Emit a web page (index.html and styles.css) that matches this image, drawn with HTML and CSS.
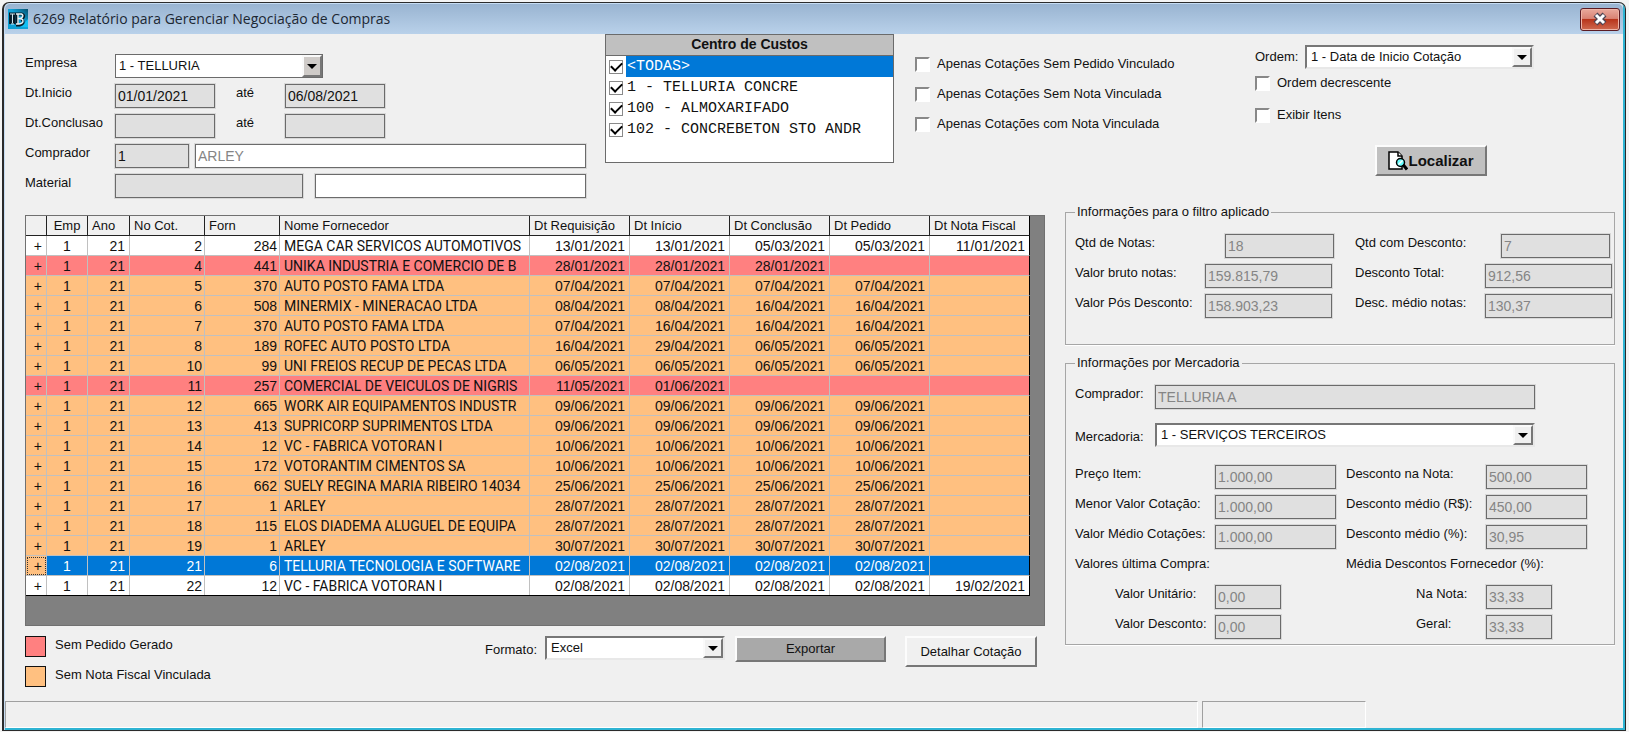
FILE: index.html
```html
<!DOCTYPE html>
<html lang="pt-BR">
<head>
<meta charset="utf-8">
<title>6269 Relatório para Gerenciar Negociação de Compras</title>
<link rel="stylesheet" href="styles.css">
</head>
<body>
<div class="window">
  <header class="titlebar">
    <svg class="app-icon" width="20" height="20" viewBox="0 0 20 20" aria-hidden="true">
      <defs><linearGradient id="sky" x1="0" y1="1" x2="1" y2="0"><stop offset="0" stop-color="#0a9ed2"/><stop offset=".55" stop-color="#10a6dc"/><stop offset="1" stop-color="#06506e"/></linearGradient></defs>
      <rect width="20" height="20" fill="url(#sky)"/>
      <path d="M13 18l7-8v8z" fill="#12c0f4"/>
      <path d="M1 5h9M2.500 5v10M6 5v10M9 5v11M9 5h5q3 1 1 4-2 1.500 0 3 1 3-3 4H8" stroke="#071a26" stroke-width="2.800" fill="none"/>
      <path d="M2 5h5M4.500 5v9M3 15h3" stroke="#cfe6ee" stroke-width="1" fill="none"/>
      <path d="M8 5h5.500q2 1 1 3-1 1.500-3.500 1.500 4 0 4 2.500t-4 3H8M10 5v10M10 9.500h2" stroke="#e9f7fb" stroke-width="1.400" fill="none"/>
    </svg>
    <h1 class="title">6269 Relatório para Gerenciar Negociação de Compras</h1>
    <button class="close" type="button" aria-label="Fechar">
      <svg width="16" height="14" viewBox="0 0 16 14" aria-hidden="true"><path d="M3.500 2.500l9 9M12.500 2.500l-9 9" stroke="#4b4453" stroke-width="5.500"/><path d="M4 3l8 8M12 3l-8 8" stroke="#fff" stroke-width="3"/></svg>
    </button>
  </header>

  <main class="content">
    <section class="filters">
      <div class="form">
        <div class="form-row">
          <label for="empresa">Empresa</label>
          <span class="select flat w-empresa"><select id="empresa"><option>1 - TELLURIA</option></select><span class="arrow"></span></span>
        </div>
        <div class="form-row">
          <label for="ini1">Dt.Inicio</label>
          <input class="field w-date" id="ini1" value="01/01/2021">
          <label class="until" for="ini2">até</label>
          <input class="field w-date" id="ini2" value="06/08/2021">
        </div>
        <div class="form-row">
          <label for="con1">Dt.Conclusao</label>
          <input class="field w-date" id="con1">
          <label class="until" for="con2">até</label>
          <input class="field w-date" id="con2">
        </div>
        <div class="form-row">
          <label for="comp">Comprador</label>
          <span class="pair"><input class="field w-code" id="comp" value="1"><input class="field white muted grow" aria-label="Nome do comprador" value="ARLEY"></span>
        </div>
        <div class="form-row">
          <label for="mat">Material</label>
          <span class="pair wide"><input class="field w-material" id="mat"><input class="field white grow" aria-label="Nome do material"></span>
        </div>
      </div>

      <div class="centers">
        <h2>Centro de Custos</h2>
        <label class="center selected"><input type="checkbox" checked><span>&lt;TODAS&gt;</span></label>
        <label class="center"><input type="checkbox" checked><span>1 - TELLURIA CONCRE</span></label>
        <label class="center"><input type="checkbox" checked><span>100 - ALMOXARIFADO</span></label>
        <label class="center"><input type="checkbox" checked><span>102 - CONCREBETON STO ANDR</span></label>
      </div>

      <div class="checks">
        <label class="check"><input type="checkbox">Apenas Cotações Sem Pedido Vinculado</label>
        <label class="check"><input type="checkbox">Apenas Cotações Sem Nota Vinculada</label>
        <label class="check"><input type="checkbox">Apenas Cotações com Nota Vinculada</label>
      </div>

      <div class="ordering">
        <div class="order-row">
          <label for="ordem">Ordem:</label>
          <span class="select grow"><select id="ordem"><option>1 - Data de Inicio Cotação</option></select><span class="arrow"></span></span>
        </div>
        <label class="check"><input type="checkbox">Ordem decrescente</label>
        <label class="check items"><input type="checkbox">Exibir Itens</label>
        <button class="btn find" type="button">
          <svg width="20" height="20" viewBox="0 0 20 20" aria-hidden="true">
            <path d="M1 1h9l4 4v13H1z" fill="#fff" stroke="#000" stroke-width="1.500"/>
            <path d="M10 1v4h4" fill="#fff" stroke="#000" stroke-width="1.500"/>
            <circle cx="12.500" cy="11.500" r="4" fill="#6ff" stroke="#000" stroke-width="1.500"/>
            <path d="M10.500 13.500l4-4" stroke="#fff" stroke-width="1.500"/>
            <path d="M15 13.500l4 5" stroke="#000" stroke-width="3"/>
          </svg>Localizar</button>
      </div>
    </section>

    <section class="lower">
      <div class="left">
        <div class="grid">
          <table>
            <colgroup><col class="c-plus"><col class="c-emp"><col class="c-ano"><col class="c-num"><col class="c-num"><col><col class="c-date"><col class="c-date"><col class="c-date"><col class="c-date"><col class="c-date"></colgroup>
            <thead><tr><th></th><th class="mid">Emp</th><th>Ano</th><th>No Cot.</th><th>Forn</th><th>Nome Fornecedor</th><th>Dt Requisição</th><th>Dt Início</th><th>Dt Conclusão</th><th>Dt Pedido</th><th>Dt Nota Fiscal</th></tr></thead>
            <tbody>
<tr><td>+</td><td>1</td><td>21</td><td>2</td><td>284</td><td>MEGA CAR SERVICOS AUTOMOTIVOS</td><td>13/01/2021</td><td>13/01/2021</td><td>05/03/2021</td><td>05/03/2021</td><td>11/01/2021</td></tr>
<tr class="red"><td>+</td><td>1</td><td>21</td><td>4</td><td>441</td><td>UNIKA INDUSTRIA E COMERCIO DE B</td><td>28/01/2021</td><td>28/01/2021</td><td>28/01/2021</td><td></td><td></td></tr>
<tr class="orange"><td>+</td><td>1</td><td>21</td><td>5</td><td>370</td><td>AUTO POSTO FAMA LTDA</td><td>07/04/2021</td><td>07/04/2021</td><td>07/04/2021</td><td>07/04/2021</td><td></td></tr>
<tr class="orange"><td>+</td><td>1</td><td>21</td><td>6</td><td>508</td><td>MINERMIX - MINERACAO LTDA</td><td>08/04/2021</td><td>08/04/2021</td><td>16/04/2021</td><td>16/04/2021</td><td></td></tr>
<tr class="orange"><td>+</td><td>1</td><td>21</td><td>7</td><td>370</td><td>AUTO POSTO FAMA LTDA</td><td>07/04/2021</td><td>16/04/2021</td><td>16/04/2021</td><td>16/04/2021</td><td></td></tr>
<tr class="orange"><td>+</td><td>1</td><td>21</td><td>8</td><td>189</td><td>ROFEC AUTO POSTO LTDA</td><td>16/04/2021</td><td>29/04/2021</td><td>06/05/2021</td><td>06/05/2021</td><td></td></tr>
<tr class="orange"><td>+</td><td>1</td><td>21</td><td>10</td><td>99</td><td>UNI FREIOS RECUP DE PECAS LTDA</td><td>06/05/2021</td><td>06/05/2021</td><td>06/05/2021</td><td>06/05/2021</td><td></td></tr>
<tr class="red"><td>+</td><td>1</td><td>21</td><td>11</td><td>257</td><td>COMERCIAL DE VEICULOS DE NIGRIS</td><td>11/05/2021</td><td>01/06/2021</td><td></td><td></td><td></td></tr>
<tr class="orange"><td>+</td><td>1</td><td>21</td><td>12</td><td>665</td><td>WORK AIR EQUIPAMENTOS INDUSTR</td><td>09/06/2021</td><td>09/06/2021</td><td>09/06/2021</td><td>09/06/2021</td><td></td></tr>
<tr class="orange"><td>+</td><td>1</td><td>21</td><td>13</td><td>413</td><td>SUPRICORP SUPRIMENTOS LTDA</td><td>09/06/2021</td><td>09/06/2021</td><td>09/06/2021</td><td>09/06/2021</td><td></td></tr>
<tr class="orange"><td>+</td><td>1</td><td>21</td><td>14</td><td>12</td><td>VC - FABRICA VOTORAN I</td><td>10/06/2021</td><td>10/06/2021</td><td>10/06/2021</td><td>10/06/2021</td><td></td></tr>
<tr class="orange"><td>+</td><td>1</td><td>21</td><td>15</td><td>172</td><td>VOTORANTIM CIMENTOS SA</td><td>10/06/2021</td><td>10/06/2021</td><td>10/06/2021</td><td>10/06/2021</td><td></td></tr>
<tr class="orange"><td>+</td><td>1</td><td>21</td><td>16</td><td>662</td><td>SUELY REGINA MARIA RIBEIRO 14034</td><td>25/06/2021</td><td>25/06/2021</td><td>25/06/2021</td><td>25/06/2021</td><td></td></tr>
<tr class="orange"><td>+</td><td>1</td><td>21</td><td>17</td><td>1</td><td>ARLEY</td><td>28/07/2021</td><td>28/07/2021</td><td>28/07/2021</td><td>28/07/2021</td><td></td></tr>
<tr class="orange"><td>+</td><td>1</td><td>21</td><td>18</td><td>115</td><td>ELOS DIADEMA ALUGUEL DE EQUIPA</td><td>28/07/2021</td><td>28/07/2021</td><td>28/07/2021</td><td>28/07/2021</td><td></td></tr>
<tr class="orange"><td>+</td><td>1</td><td>21</td><td>19</td><td>1</td><td>ARLEY</td><td>30/07/2021</td><td>30/07/2021</td><td>30/07/2021</td><td>30/07/2021</td><td></td></tr>
<tr class="blue"><td>+</td><td>1</td><td>21</td><td>21</td><td>6</td><td>TELLURIA TECNOLOGIA E SOFTWARE</td><td>02/08/2021</td><td>02/08/2021</td><td>02/08/2021</td><td>02/08/2021</td><td></td></tr>
<tr><td>+</td><td>1</td><td>21</td><td>22</td><td>12</td><td>VC - FABRICA VOTORAN I</td><td>02/08/2021</td><td>02/08/2021</td><td>02/08/2021</td><td>02/08/2021</td><td>19/02/2021</td></tr>
            </tbody>
          </table>
        </div>
        <div class="actions">
          <div class="legend-list">
            <div class="legend-item"><span class="swatch red"></span>Sem Pedido Gerado</div>
            <div class="legend-item"><span class="swatch orange"></span>Sem Nota Fiscal Vinculada</div>
          </div>
          <label class="format-label" for="formato">Formato:</label>
          <span class="select w-format"><select id="formato"><option>Excel</option></select><span class="arrow"></span></span>
          <button class="btn export" type="button">Exportar</button>
          <button class="btn detail" type="button">Detalhar Cotação</button>
        </div>
      </div>

      <div class="right">
        <fieldset class="group">
          <legend>Informações para o filtro aplicado</legend>
          <div class="totals">
            <label for="q1">Qtd de Notas:</label><input class="field w-qty" id="q1" value="18" disabled>
            <label for="q2">Qtd com Desconto:</label><input class="field w-qty last" id="q2" value="7" disabled>
            <label for="q3">Valor bruto notas:</label><input class="field w-total" id="q3" value="159.815,79" disabled>
            <label for="q4">Desconto Total:</label><input class="field w-total" id="q4" value="912,56" disabled>
            <label for="q5">Valor Pós Desconto:</label><input class="field w-total" id="q5" value="158.903,23" disabled>
            <label for="q6">Desc. médio notas:</label><input class="field w-total" id="q6" value="130,37" disabled>
          </div>
        </fieldset>
        <fieldset class="group">
          <legend>Informações por Mercadoria</legend>
          <div class="goods-head">
            <label for="g1">Comprador:</label><input class="field" id="g1" value="TELLURIA A" disabled>
            <label class="low" for="g2">Mercadoria:</label>
            <span class="select"><select id="g2"><option>1 - SERVIÇOS TERCEIROS</option></select><span class="arrow"></span></span>
          </div>
          <div class="goods">
            <label for="p1">Preço Item:</label><input class="field w-price" id="p1" value="1.000,00" disabled>
            <label for="p2">Desconto na Nota:</label><input class="field w-disc" id="p2" value="500,00" disabled>
            <label for="p3">Menor Valor Cotação:</label><input class="field w-price" id="p3" value="1.000,00" disabled>
            <label for="p4">Desconto médio (R$):</label><input class="field w-disc" id="p4" value="450,00" disabled>
            <label for="p5">Valor Médio Cotações:</label><input class="field w-price" id="p5" value="1.000,00" disabled>
            <label for="p6">Desconto médio (%):</label><input class="field w-disc" id="p6" value="30,95" disabled>
            <span class="sub">Valores última Compra:</span><span class="sub">Média Descontos Fornecedor (%):</span>
            <label class="in1" for="p7">Valor Unitário:</label><input class="field w-small" id="p7" value="0,00" disabled>
            <label class="in2" for="p8">Na Nota:</label><input class="field w-small" id="p8" value="33,33" disabled>
            <label class="in1" for="p9">Valor Desconto:</label><input class="field w-small" id="p9" value="0,00" disabled>
            <label class="in2" for="p10">Geral:</label><input class="field w-small" id="p10" value="33,33" disabled>
          </div>
        </fieldset>
      </div>
    </section>
  </main>

  <footer class="status"><span class="pane main-pane"></span><span class="pane"></span></footer>
</div>
</body>
</html>
```

FILE: styles.css
```css
* { box-sizing: border-box; }

body {
  margin: 0;
  padding: 2px 3px 1px 2px;
  min-height: 100vh;
  display: flex;
  background: #f4f4f4;
  font: 13px/18px "Liberation Sans", Arial, sans-serif;
  color: #111;
}

input, select, button { font: inherit; color: inherit; margin: 0; }

.window {
  flex: 1;
  display: flex;
  flex-direction: column;
  border: 1px solid #2b2b2b;
  border-left-width: 2px;
  border-radius: 7px 7px 0 0;
  background: #f0f0f0;
  box-shadow: inset 1px 1px #c5dcf3, inset -2px -2px #2fb4d3;
  padding: 1px 2px 2px 1px;
}

.titlebar {
  display: flex;
  align-items: center;
  height: 30px;
  padding: 0 3px;
  background: linear-gradient(#99b4d1, #b9d1ea);
  border-radius: 5px 5px 0 0;
}
.app-icon { flex: none; }
.title {
  flex: 1;
  margin: 0 0 0 5px;
  font: 14px/20px "Open Sans", "Noto Sans", sans-serif;
  color: #1c2733;
}
.close {
  width: 40px;
  height: 23px;
  display: flex;
  align-items: center;
  justify-content: center;
  padding: 0;
  border: 1px solid #5b1c24;
  border-radius: 3px;
  background: linear-gradient(#e9a99c, #d98374 45%, #b8351c 50%, #cf6a50);
  box-shadow: inset 0 0 0 1px #eeb5a8;
}

.content { flex: 1; padding: 0 8px 0 20px; }

.filters { display: flex; align-items: flex-start; }

.form {
  width: 561px;
  padding-top: 20px;
  display: grid;
  gap: 6px;
}
.form-row {
  display: grid;
  grid-template-columns: 90px 100px 70px 1fr;
  height: 24px;
}
.until { padding-left: 21px; }
.pair { grid-column: 2 / -1; display: flex; gap: 6px; }
.pair.wide { gap: 12px; }
.grow { flex: 1; min-width: 0; }

.field {
  height: 24px;
  width: 100%;
  padding: 0 2px;
  border: 1px solid #6b6b6b;
  border-radius: 0;
  background: #e0e0e0;
  outline: 1px solid #d8d8d8;
  font: 14px/20px "Liberation Sans", Arial, sans-serif;
}
.field.white { background: #fff; }
.field:disabled, .field.muted { color: #858585; }
.w-date { width: 100px; }
.w-code { width: 74px; }
.w-material { width: 188px; }
.w-empresa { grid-column: 2 / -1; width: 208px; }

.select {
  position: relative;
  display: block;
  height: 24px;
  background: #fff;
  border: 2px solid;
  border-color: #777 #e8e8e8 #e8e8e8 #777;
}
.select select {
  appearance: none;
  width: 100%;
  height: 100%;
  padding: 0 22px 0 4px;
  border: 0;
  background: none;
  display: block;
}
.arrow {
  position: absolute;
  top: 0;
  right: 0;
  bottom: 0;
  width: 20px;
  background: #f0f0f0;
  border: 2px solid;
  border-color: #fafafa #777 #777 #fafafa;
  display: grid;
  place-items: center;
  pointer-events: none;
}
.arrow::after {
  content: "";
  border: 5px solid transparent;
  border-top-color: #000;
  border-bottom: 0;
}
.select.flat { border: 1px solid #6b6b6b; }
.select.flat select { padding-left: 3px; }
.select.flat .arrow { background: #cfcbc8; }

.centers {
  width: 289px;
  height: 129px;
  margin-left: 19px;
  border: 1px solid #6b6b6b;
  background: #fff;
}
.centers h2 {
  margin: 0;
  height: 21px;
  background: #c0c0c0;
  border-bottom: 1px solid #6b6b6b;
  text-align: center;
  font: bold 14px/19px "Liberation Sans", Arial, sans-serif;
}
.center {
  display: flex;
  align-items: center;
  height: 21px;
  padding-left: 3px;
  gap: 3px;
  font: 15px/21px "Liberation Mono", monospace;
}
.center span { flex: 1; padding-left: 1px; }
.center.selected span { background: #0078d7; color: #fff; }
.center input, .check input {
  appearance: none;
  flex: none;
  width: 14px;
  height: 14px;
  border: 1px solid #8a8a8a;
  background: #fff;
}
.center input:checked {
  display: grid;
  place-items: center;
}
.center input:checked::after {
  content: "";
  width: 9px;
  height: 5px;
  margin-bottom: 3px;
  border: solid #000;
  border-width: 0 0 2px 2px;
  transform: rotate(-45deg);
}

.checks {
  display: grid;
  gap: 12px;
  margin-left: 21px;
  padding-top: 21px;
}
.check {
  display: flex;
  align-items: center;
  gap: 7px;
  height: 18px;
  white-space: nowrap;
}
.check input {
  width: 15px;
  height: 15px;
  border: 2px solid;
  border-color: #888 #fff #fff #888;
}

.ordering {
  width: 279px;
  margin: 0 81px 0 auto;
  padding-top: 11px;
  display: flex;
  flex-direction: column;
}
.order-row { display: flex; margin-bottom: 5px; }
.order-row label { width: 50px; padding-top: 3px; }
.items { margin-top: 14px; }

.btn {
  display: flex;
  align-items: center;
  justify-content: center;
  padding: 0;
  background: #f0f0f0;
  border: 2px solid;
  border-color: #fcfcfc #777 #777 #fcfcfc;
}
.find {
  width: 112px;
  height: 31px;
  margin: 21px 47px 0 auto;
  background: #c0c0c0;
  font: bold 15px/18px "Liberation Sans", Arial, sans-serif;
}

.lower {
  display: grid;
  grid-template-columns: minmax(0, 1fr) 550px;
  gap: 20px;
  margin-top: 5px;
}
.left { padding-top: 12px; }

.grid {
  background: #808080;
  border: 1px solid #707070;
  padding: 0 14px 29px 0;
}
table {
  width: 100%;
  table-layout: fixed;
  border-collapse: separate;
  border-spacing: 0;
  background: #fff;
  border-bottom: 1px solid #000;
}
.c-plus { width: 21px; }
.c-emp { width: 41px; }
.c-ano { width: 42px; }
.c-num { width: 75px; }
.c-date { width: 100px; }
th, td {
  height: 20px;
  padding: 1px 4px 0;
  font-size: 14px;
  line-height: 18px;
  overflow: hidden;
  white-space: nowrap;
  text-align: right;
  border-right: 1px solid #c0c0c0;
  border-bottom: 1px solid #c0c0c0;
}
th {
  background: #f0f0f0;
  font-weight: normal;
  font-size: 13px;
  text-align: left;
  border-color: #222;
}
th.mid { text-align: center; }
td:nth-child(2) { text-align: center; }
td:nth-child(n+4) { padding-right: 2px; }
td:nth-child(6) { text-align: left; font-family: Roboto, sans-serif; }
th:last-child, td:last-child { border-right-color: #000; }
td:nth-child(n+7) { padding-right: 4px; }
tbody tr:last-child td { height: 19px; border-bottom: 0; }
.red { background: #ff8080; }
.orange { background: #ffc080; }
.blue { background: #0078d7; color: #fff; }
.blue td:first-child {
  background: #ffc080;
  color: #111;
  outline: 1px dotted #333;
  outline-offset: -2px;
}

.actions { display: flex; align-items: flex-start; margin-top: 10px; }
.legend-list { display: grid; gap: 9px; flex: 1; }
.legend-item { display: flex; gap: 9px; height: 21px; }
.swatch { width: 21px; height: 21px; border: 1px solid #111; }
.format-label { width: 60px; padding-top: 5px; }
.w-format { width: 180px; }
.export { width: 151px; height: 26px; margin-left: 10px; background: #a9a9a9; }
.detail { width: 132px; height: 31px; margin: 0 8px 0 19px; }

.right { display: grid; gap: 9px; align-content: start; }
.group {
  min-width: 0;
  margin: 0;
  padding: 13px 2px 26px 9px;
  border: 1px solid #a6a6a6;
  box-shadow: 0 1px #fff;
}
.group + .group { padding-bottom: 5px; }
.group legend { padding: 0 2px; line-height: 18px; }
.totals, .goods {
  display: grid;
  grid-template-columns: 130px 1fr 130px 127px;
  gap: 6px 0;
}
.w-qty { width: 109px; margin-left: 20px; }
.w-qty.last { margin-left: 16px; }
.w-total { width: 127px; }
.goods-head {
  display: grid;
  grid-template-columns: 80px 1fr;
  gap: 14px 0;
  margin-right: 77px;
}
.low { padding-top: 5px; }
.goods {
  grid-template-columns: 140px 131px 140px 1fr;
  margin-top: 18px;
}
.w-price { width: 121px; }
.w-disc { width: 101px; }
.w-small { width: 66px; }
.sub { grid-column: span 2; height: 24px; }
.in1 { padding-left: 40px; }
.in2 { padding-left: 70px; }
label, .sub { white-space: nowrap; }

.status { display: flex; gap: 4px; height: 27px; }
.pane {
  width: 164px;
  border: 1px solid;
  border-color: #a0a0a0 #fff #fff #a0a0a0;
}
.main-pane { flex: 1; max-width: 1193px; }
```
